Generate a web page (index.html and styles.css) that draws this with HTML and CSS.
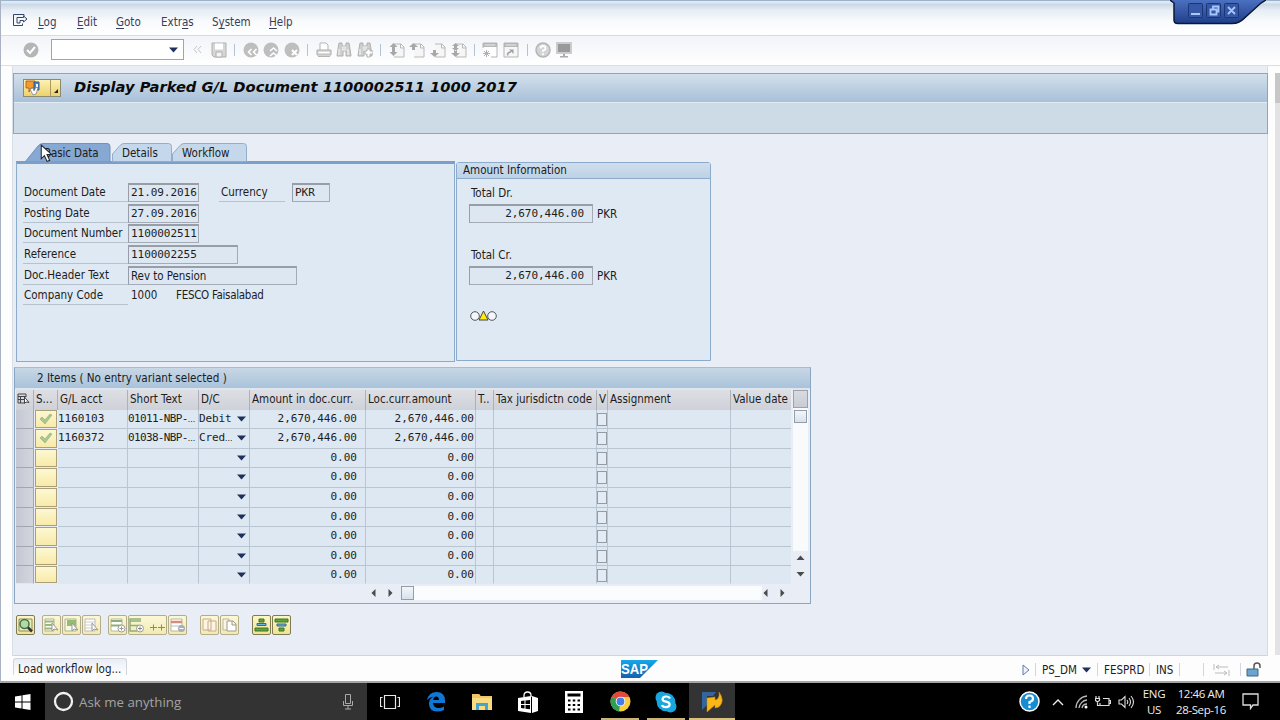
FILE: index.html
```html
<!DOCTYPE html>
<html lang="en">
<head>
  <meta charset="UTF-8" />
  <title>Display Parked G/L Document</title>
  <link rel="stylesheet" href="styles.css">
</head>
<body>
  <!-- Shared icons -->
  <svg class="defs" width="0" height="0">
    <symbol id="down" viewBox="0 0 9 6"><path d="M0 .5h9L4.5 5.5z" fill="#20305c"/></symbol>
    <symbol id="page" viewBox="0 0 16 16"><path d="M5 2h7l3 3v10H5" fill="#f6f6f6" stroke="#b9b9b9"/><path d="M11.500 2v4H15" fill="none" stroke="#b9b9b9"/></symbol>
    <symbol id="tick" viewBox="0 0 14 12"><path d="M1 6l2-2 3 3 5-6 2 1-7 9z" fill="#a9c68c" stroke="#92ad7c" stroke-width=".6"/></symbol>
    <symbol id="cursor" viewBox="0 0 12 18"><path d="M1 1v13l3-3 2.500 5.500 2.500-1L6.500 10H11z" fill="#fff" stroke="#222"/></symbol>
    <symbol id="binoc" viewBox="0 0 16 16"><path d="M3 1h3v3h4V1h3l1 6 1 7h-5V9H7v5H1l1-7z" fill="#cfcfcf" stroke="#b0b0b0"/><path d="M7 4v5M9 4v5M3 7v6M12 7v6" stroke="#f7f7f7"/></symbol>
  </svg>

  <div class="window">
    <div class="menubar">
      <svg class="menu-icon" width="15" height="13" viewBox="0 0 15 13"><path d="M11 2.500v-2H.500v11h9V9.500M4 3.500h6.500V2L14 5l-3.500 3V6.500H7V9H4z" fill="none" stroke="#34446a"/></svg>
      <nav class="menu">
        <a><u>L</u>og</a>
        <a><u>E</u>dit</a>
        <a><u>G</u>oto</a>
        <a>Extr<u>a</u>s</a>
        <a>S<u>y</u>stem</a>
        <a><u>H</u>elp</a>
      </nav>
      <div class="win-controls">
        <svg width="96" height="26" viewBox="0 0 96 26">
          <defs><linearGradient id="wg" x1="0" y1="0" x2="0" y2="1"><stop offset="0" stop-color="#4a70c0"/><stop offset="1" stop-color="#1f3d88"/></linearGradient></defs>
          <path d="M0 0l4 3v17q0 4 4 4h54q7 0 12-5L91 3l5-3z" fill="url(#wg)"/>
          <path d="M0 0l4 3v17q0 3.500 4 3.500h54q7 0 12-5L91 3l5-3" fill="none" stroke="#0b1838" stroke-width="1.500"/>
          <g fill="#3458a6" stroke="#1c3576"><rect x="18.500" y="3.500" width="14" height="14" rx="1"/><rect x="36.500" y="3.500" width="14" height="14" rx="1"/><rect x="54.500" y="3.500" width="14" height="14" rx="1"/></g>
          <path d="M21 14h9M40.500 9.500h6v5h-6zM43 9V6.500h5.500v5H47M58 7l7 7M65 7l-7 7" fill="none" stroke="#a9c6ff" stroke-width="1.800"/>
        </svg>
      </div>
    </div>

    <div class="toolbar">
      <svg class="ok" width="16" height="16"><circle cx="8" cy="8" r="7.500" fill="#b5b5b5"/><path d="M4 8l3 3 5-6" fill="none" stroke="#fff" stroke-width="2"/></svg>
      <div class="command"><svg width="9" height="6"><use href="#down"/></svg></div>
      <svg class="collapse" width="9" height="9"><path d="M4 1L1 4.500 4 8M8 1L5 4.500 8 8" fill="none" stroke="#c6c6c6"/></svg>
      <div class="icons">
        <svg width="16" height="16"><path d="M1 1h14v14H3l-2-2z" fill="#d6d6d6" stroke="#b0b0b0"/><path d="M4 1.500h8v6H4z" fill="#fff"/><path d="M5 10h6v5H5z" fill="#f4f4f4" stroke="#b0b0b0"/></svg>
        <i></i>
        <svg width="16" height="16"><circle cx="8" cy="8" r="7.500" fill="#bebebe"/><path d="M8.500 7l-3 3 3 3M13.500 7l-3 3 3 3" fill="none" stroke="#fff" stroke-width="1.600"/></svg>
        <svg width="16" height="16"><circle cx="8" cy="8" r="7.500" fill="#bebebe"/><path d="M7 9l3.500-3L14 9M7 14l3.500-3 3.500 3" fill="none" stroke="#fff" stroke-width="1.600"/></svg>
        <svg width="16" height="16"><circle cx="8" cy="8" r="7.500" fill="#bebebe"/><path d="M8 8l5 5M13 8l-5 5" stroke="#fff" stroke-width="2"/></svg>
        <i></i>
        <svg width="16" height="16"><path d="M4 8V1h6l2 2v5" fill="#fff" stroke="#b5b5b5"/><path d="M1 8h14v5H1z" fill="#ddd" stroke="#aaa"/><path d="M2 14.500h12" stroke="#b5b5b5"/><path d="M3 10.500h10" stroke="#fff"/></svg>
        <svg width="16" height="16"><use href="#binoc"/></svg>
        <svg width="16" height="16"><use href="#binoc"/><path d="M10 7h3v2h3v3h-3v3h-3v-3H8V9h2z" fill="#fff" stroke="#b5b5b5"/></svg>
        <i></i>
        <svg width="16" height="16"><use href="#page"/><path d="M4.500 1L8.500 5H6v5h2.500L4.500 14l-4-4H3V5H.5z" fill="#a8a8a8"/></svg>
        <svg width="16" height="16"><use href="#page"/><path d="M4.500 1L9 5H6v3H3V5H0z" fill="#a8a8a8"/></svg>
        <svg width="16" height="16"><use href="#page"/><path d="M4.500 15L9 11H6V8H3v3H0z" fill="#a8a8a8"/></svg>
        <svg width="16" height="16"><use href="#page"/><path d="M4.500 1L8 4H6v2h2L4.500 9 1 6h2V4H1zM4.500 15L9 11H6V8H3v3H0z" fill="#a8a8a8"/></svg>
        <i></i>
        <svg width="16" height="16"><path d="M1 6V1h14v14H9" fill="#fff" stroke="#b5b5b5"/><path d="M1 1h14v4H1z" fill="#b5b5b5"/><path d="M2.500 3h11" stroke="#eee"/><path d="M4.500 8v7M1 11.500h7M2 9l5 5M7 9l-5 5" stroke="#b0b0b0"/></svg>
        <svg width="16" height="16"><path d="M1 1h14v14H1z" fill="#f6f6f6" stroke="#b5b5b5"/><path d="M1 1h14v4H1z" fill="#b5b5b5"/><path d="M2.500 3h11" stroke="#eee"/><path d="M4.500 13.500q0-3.500 3.500-3.500" fill="none" stroke="#a0a0a0" stroke-width="1.500"/><path d="M6 7.500h4.500V12z" fill="#a0a0a0"/></svg>
        <i></i>
        <svg width="16" height="16"><circle cx="8" cy="8" r="7" fill="#d4d4d4" stroke="#b5b5b5" stroke-width="1.500"/><path d="M5.500 6.500Q5.500 4 8 4t2.500 2.200Q10.500 8 8 8.500V10M8 11.300v1.700" fill="none" stroke="#fff" stroke-width="1.800"/></svg>
        <svg width="16" height="16"><path d="M1 1h14v10H1z" fill="#999" stroke="#ccc" stroke-width="2"/><path d="M7 12h2v2h3v1.500H4V14h3z" fill="#aaa"/></svg>
      </div>
    </div>

    <div class="body">
      <main class="screen">
        <div class="title-area">
          <header class="title-bar">
            <div class="gos">
              <svg width="38" height="18" viewBox="0 0 38 18"><path d="M3 2h9v7H8l-2 4V9H3z" fill="#f59a2b" stroke="#b8641c"/><path d="M11 3h5v8h-5z" fill="#4f87ba" stroke="#2c5c8c"/><path d="M13 5h2v3h-2z" fill="#fff"/><path d="M7 10l3-1 1 3 2-4 2 1-2 6-3 1z" fill="#fff" stroke="#777" stroke-width=".7"/><path d="M27.500 1v16" stroke="#a89a60"/><path d="M35 10v4h-4z" fill="#222"/></svg>
            </div>
            <h1>Display Parked G/L Document 1100002511 1000 2017</h1>
          </header>
          <div class="app-toolbar"></div>
        </div>

        <div class="header-data">
          <section class="basic">
            <div class="tabs">
              <div class="tab active"><svg width="86" height="19"><path d="M0 19L13 3q2-2.500 5-2.500h64q3 0 3 3V19z" fill="#86a8d3" stroke="#6f93bd"/></svg><span>Basic Data</span></div>
              <div class="tab"><svg width="60" height="19"><path d="M.5 18.500V11L8 2.500q2-2 4-2h44.500q3 0 3 3v15z" fill="#c4d7eb" stroke="#94aeca"/></svg><span>Details</span></div>
              <div class="tab"><svg width="75" height="19"><path d="M.5 18.500V11L8 2.500q2-2 4-2h59.500q3 0 3 3v15z" fill="#c4d7eb" stroke="#94aeca"/></svg><span>Workflow</span></div>
            </div>
            <div class="panel">
              <div class="line"><label>Document Date</label><b class="field w-date">21.09.2016</b><label class="cur">Currency</label><b class="field w-cur">PKR</b></div>
              <div class="line"><label>Posting Date</label><b class="field w-date">27.09.2016</b></div>
              <div class="line"><label>Document Number</label><b class="field w-date">1100002511</b></div>
              <div class="line"><label>Reference</label><b class="field w-ref">1100002255</b></div>
              <div class="line"><label>Doc.Header Text</label><b class="field w-text prop">Rev to Pension</b></div>
              <div class="line"><label>Company Code</label><span class="code">1000</span><span class="company">FESCO Faisalabad</span></div>
            </div>
            <svg class="pointer" width="13" height="19" viewBox="0 0 12 18"><use href="#cursor"/></svg>
          </section>

          <section class="amounts">
            <h2>Amount Information</h2>
            <p>Total Dr.</p>
            <div class="amount"><b class="field">2,670,446.00</b><span>PKR</span></div>
            <p>Total Cr.</p>
            <div class="amount"><b class="field">2,670,446.00</b><span>PKR</span></div>
            <svg class="light" width="28" height="12"><g fill="#f3f6fa" stroke="#555"><circle cx="5" cy="6" r="4.300"/><circle cx="22" cy="6" r="4.300"/></g><path d="M13.500 1L18 10H9z" fill="#ffee10" stroke="#444"/></svg>
          </section>
        </div>

        <section class="items">
          <h2>2 Items ( No entry variant selected )</h2>
          <div class="grid">
            <div class="row head">
              <span class="cfg"><svg width="13" height="12"><path d="M9 4V1H1v9h6M1 3.500h8M1 6.500h6M3.500 3.500V10" fill="none" stroke="#444"/><path d="M7.500 4v6.500l1.500-1.500 3 .5z" fill="#fff" stroke="#444"/></svg></span><span>S...</span><span>G/L acct</span><span>Short Text</span><span>D/C</span><span>Amount in doc.curr.</span><span>Loc.curr.amount</span><span>T..</span><span>Tax jurisdictn code</span><span>V</span><span>Assignment</span><span>Value date</span>
            </div>
            <div class="row"><span class="sel"></span><span class="st"><svg width="14" height="12"><use href="#tick"/></svg></span><span>1160103</span><span class="short">01011-NBP-<em>...</em></span><span class="dc">Debit<svg width="9" height="6"><use href="#down"/></svg></span><span class="num">2,670,446.00</span><span class="num">2,670,446.00</span><span></span><span></span><span class="chk"><i></i></span><span></span><span></span></div>
            <div class="row"><span class="sel"></span><span class="st"><svg width="14" height="12"><use href="#tick"/></svg></span><span>1160372</span><span class="short">01038-NBP-<em>...</em></span><span class="dc">Cred<em>...</em><svg width="9" height="6"><use href="#down"/></svg></span><span class="num">2,670,446.00</span><span class="num">2,670,446.00</span><span></span><span></span><span class="chk"><i></i></span><span></span><span></span></div>
            <div class="row"><span class="sel"></span><span class="st"></span><span></span><span></span><span class="dc"><svg width="9" height="6"><use href="#down"/></svg></span><span class="num">0.00</span><span class="num">0.00</span><span></span><span></span><span class="chk"><i></i></span><span></span><span></span></div>
            <div class="row"><span class="sel"></span><span class="st"></span><span></span><span></span><span class="dc"><svg width="9" height="6"><use href="#down"/></svg></span><span class="num">0.00</span><span class="num">0.00</span><span></span><span></span><span class="chk"><i></i></span><span></span><span></span></div>
            <div class="row"><span class="sel"></span><span class="st"></span><span></span><span></span><span class="dc"><svg width="9" height="6"><use href="#down"/></svg></span><span class="num">0.00</span><span class="num">0.00</span><span></span><span></span><span class="chk"><i></i></span><span></span><span></span></div>
            <div class="row"><span class="sel"></span><span class="st"></span><span></span><span></span><span class="dc"><svg width="9" height="6"><use href="#down"/></svg></span><span class="num">0.00</span><span class="num">0.00</span><span></span><span></span><span class="chk"><i></i></span><span></span><span></span></div>
            <div class="row"><span class="sel"></span><span class="st"></span><span></span><span></span><span class="dc"><svg width="9" height="6"><use href="#down"/></svg></span><span class="num">0.00</span><span class="num">0.00</span><span></span><span></span><span class="chk"><i></i></span><span></span><span></span></div>
            <div class="row"><span class="sel"></span><span class="st"></span><span></span><span></span><span class="dc"><svg width="9" height="6"><use href="#down"/></svg></span><span class="num">0.00</span><span class="num">0.00</span><span></span><span></span><span class="chk"><i></i></span><span></span><span></span></div>
            <div class="row last"><span class="sel"></span><span class="st"></span><span></span><span></span><span class="dc"><svg width="9" height="6"><use href="#down"/></svg></span><span class="num">0.00</span><span class="num">0.00</span><span></span><span></span><span class="chk"><i></i></span><span></span><span></span></div>
          </div>
          <div class="vscroll">
            <div class="corner"></div>
            <div class="vtrack"><div class="thumb"></div></div>
            <svg width="15" height="30"><path d="M3.500 9h8L7.500 4.500zM3.500 21h8L7.500 25.500z" fill="#4a4a4a"/></svg>
          </div>
          <div class="hscroll">
            <svg width="28" height="12"><path d="M5.500 2v8L1.500 6zM18.500 2v8l4-4z" fill="#4a4a4a"/></svg>
            <div class="thumb"></div>
            <div class="htrack"></div>
            <svg width="28" height="12"><path d="M5.500 2v8L1.500 6zM18.500 2v8l4-4z" fill="#4a4a4a"/></svg>
          </div>
        </section>

        <div class="actions">
          <button><svg width="17" height="17"><path d="M2 2h13v12H2z" fill="#e8edc0" stroke="#8a8a66"/><circle cx="7.500" cy="7" r="4.500" fill="#b5d6ae" stroke="#3e7a3a" stroke-width="1.500"/><path d="M11 10.500l4 4" stroke="#333" stroke-width="2.500"/></svg></button>
          <button class="off g6"><svg width="17" height="17"><path d="M2 2h9v12H2z" fill="#fff" stroke="#aab292"/><path d="M2 4.500h9M2 8h9M2 11.500h9" stroke="#99b878" stroke-width="2"/><path d="M9 6v8l2-2 4 1z" fill="#fff" stroke="#999"/></svg></button>
          <button class="off"><svg width="17" height="17"><path d="M2 2h11v12H2z" fill="#f7f7e4" stroke="#aab292"/><path d="M4 3h9v6H4z" fill="#96bb72"/><path d="M9 6v8l2-2 4 1z" fill="#fff" stroke="#999"/></svg></button>
          <button class="off"><svg width="17" height="17"><path d="M2 2h10v12H2z" fill="#fff" stroke="#bbb"/><path d="M2 5h10M2 8h8M2 11h8" stroke="#ccc"/><path d="M9 6v8l2-2 4 1z" fill="#fff" stroke="#999"/></svg></button>
          <button class="off g6"><svg width="17" height="17"><path d="M2 2h11v12H2z" fill="#fff" stroke="#b5b8a0"/><path d="M2 4h11M2 8.500h11" stroke="#8db077" stroke-width="2"/><circle cx="12.500" cy="11.500" r="3.500" fill="#fff" stroke="#999"/><path d="M10.500 11.500h4M12.500 9.500v4" stroke="#999"/></svg></button>
          <button class="off wide"><svg width="36" height="17"><path d="M12 2H1v12h7M1 4h11M1 8.500h9" fill="none" stroke="#8db077" stroke-width="1.500"/><circle cx="11" cy="11.500" r="3.500" fill="#fff" stroke="#999"/><path d="M9 11.500h4M11 9.500v4M21 10.500h7M24.500 7.500v6M29 10.500h7M32.500 7.500v6" stroke="#888"/></svg></button>
          <button class="off"><svg width="17" height="17"><path d="M2 2h11v12H2z" fill="#fff" stroke="#b5b8a0"/><path d="M2 5h11" stroke="#d98a7c" stroke-width="2.500"/><path d="M2 9h11" stroke="#bbb"/><circle cx="12.500" cy="11.500" r="3.500" fill="#a9aebb"/><path d="M10.500 11.500h4" stroke="#fff"/></svg></button>
          <button class="off g12"><svg width="17" height="17"><path d="M2 2h8v11H2zM7 4h8v10H7z" fill="#fbf6e2" stroke="#c8a98c"/></svg></button>
          <button class="off"><svg width="17" height="17"><path d="M2 2h6v11H2z" fill="#fbf6e2" stroke="#bbb69a"/><path d="M6 4h6l3 3v7H6zM11 4v4h4" fill="#fff" stroke="#9a9a94"/></svg></button>
          <button class="g12"><svg width="17" height="17"><path d="M6 2h5v3H6zM2 11h13v3H2z" fill="#5ca63a" stroke="#3c7428"/><path d="M4 6.500h9v2H4z" fill="#6bb6dc" stroke="#32698c"/></svg></button>
          <button><svg width="17" height="17"><path d="M2 2h13v3H2zM6 11h5v3H6z" fill="#5ca63a" stroke="#3c7428"/><path d="M4 7h9v2H4z" fill="#6bb6dc" stroke="#32698c"/></svg></button>
        </div>
      </main>
      <div class="page-scroll"></div>
    </div>

    <footer class="status">
      <div class="message">Load workflow log...</div>
      <svg class="sap" width="37" height="18" viewBox="0 0 37 18">
        <defs><linearGradient id="sg" x1="0" y1="0" x2="0" y2="1"><stop offset="0" stop-color="#16a7e8"/><stop offset="1" stop-color="#1560ae"/></linearGradient></defs>
        <path d="M0 0h37L19 18H0z" fill="url(#sg)"/>
        <text x="0" y="14" textLength="27" lengthAdjust="spacingAndGlyphs">SAP</text>
      </svg>
      <div class="info">
        <svg class="play" width="8" height="12"><path d="M1 1v10l6-5z" fill="#eef3fb" stroke="#6079ad"/></svg>
        <span class="c1">PS_DM <svg width="9" height="6"><use href="#down"/></svg></span>
        <span class="c2">FESPRD</span>
        <span class="c3">INS</span>
        <span class="c4"></span>
        <span class="c5"><svg width="17" height="12"><path d="M1 0v6M3 3h12M6 1L3 3l3 2M16 6v6M2 9h12M11 7l3 2-3 2" fill="none" stroke="#bbb"/></svg></span>
        <span class="c6"><svg width="16" height="15"><path d="M8 7V4q0-3 3-3t3 3v2" fill="none" stroke="#555" stroke-width="1.500"/><path d="M1 7h11v7H1z" fill="#6ba4cc" stroke="#3c6684"/></svg></span>
      </div>
    </footer>
  </div>

  <div class="taskbar">
    <div class="start"><svg width="16" height="16"><path d="M0 2.500L6.500 1.500V7.500H0zM7.500 1.300L15.500 0v7.500h-8zM0 8.500h6.500v6L0 13.500zM7.500 8.500h8V16l-8-1.300z" fill="#fff"/></svg></div>
    <div class="search">
      <svg width="21" height="21"><circle cx="10.500" cy="10.500" r="8.500" fill="none" stroke="#f2f2f2" stroke-width="2.300"/></svg>
      <span>Ask me anything</span>
      <svg class="mic" width="12" height="17"><path d="M3.500 1.500h5v9h-5zM1.500 8v4.500h9V8M6 12.500V16M3 16h6" fill="none" stroke="#aaa"/></svg>
    </div>
    <div class="app first"><svg width="20" height="14"><path d="M4.500.5h11v13h-11zM2.500 2.500h-2v9h2M17.500 2.500h2v9h-2" fill="none" stroke="#e8e8e8" stroke-width="1.200"/></svg></div>
    <div class="app"><svg width="20" height="21"><path d="M1 9Q3 1 10.500 1 19 1 19 9.500V12H7q.5 5 5.500 5 3 0 5.500-1.500V19q-3 1.500-6.500 1.500Q3 20.500 3 12.500 3 8 7.500 5.500 3.500 6 1 9zM7.200 9H13q0-3.500-2.800-3.500T7.200 9z" fill="#0f78d4"/></svg></div>
    <div class="app"><svg width="20" height="17"><path d="M0 1h7l1.500 2H20v14H0z" fill="#f8dc84"/><path d="M0 1h7l1.500 2H20v2H0z" fill="#efc768"/><path d="M4 17v-7h12v7h-3v-4H7v4z" fill="#44a5cc"/></svg></div>
    <div class="app"><svg width="20" height="22"><path d="M6 6V4.500Q6 1 9.500 1T13 4.500V6" fill="none" stroke="#fff" stroke-width="1.300"/><path d="M0 7l13-2v17L0 20zM14 5l6 2v13l-6 2z" fill="#fff"/><path d="M3 10l3.500-.5V13H3zM7.500 9.500L12 9v4H7.500zM3 14h3.500v3.500L3 17zM7.500 14H12v4.300l-4.500-.6z" fill="#000"/></svg></div>
    <div class="app"><svg width="18" height="22"><path d="M0 0h18v22H0z" fill="#fff"/><path d="M2.500 2.500h13v3h-13z" fill="#000"/><path d="M3 9.500h12M3 14h12M3 18.500h12" stroke="#000" stroke-width="2" stroke-dasharray="2.500 2.250"/></svg></div>
    <div class="app open"><svg width="21" height="21"><circle cx="10.500" cy="10.500" r="10" fill="#f9cd3c"/><path d="M10.500 10.500L1.800 5.500A10 10 0 0 0 9 20.400z" fill="#2f9e52"/><path d="M10.500 10.500L1.800 5.500A10 10 0 0 1 19.400 6H10.500z" fill="#dd4b3c"/><circle cx="10.500" cy="10.500" r="4.800" fill="#fff"/><circle cx="10.500" cy="10.500" r="3.900" fill="#447ce8"/></svg></div>
    <div class="app open"><svg width="22" height="22"><circle cx="6.500" cy="6.500" r="6" fill="#19a6e0"/><circle cx="15.500" cy="15.500" r="6" fill="#19a6e0"/><circle cx="11" cy="11" r="9.300" fill="#19a6e0"/><path d="M15 7.500q-1-2-4-2t-3.500 2.500q0 2 3.500 2.700t3.700 2.700q-.2 2.800-3.700 2.800T7 14" fill="none" stroke="#fff" stroke-width="2.200"/></svg></div>
    <div class="app open current"><svg width="22" height="22"><path d="M1 1h14l-3 4H6v9l-5 5z" fill="#33659f"/><path d="M6 7l8-1v3q5-1 4-8 6 8 1 14-2 2-5 2v-3L6 21z" fill="#f8b617" stroke="#c8850e" stroke-width=".5"/></svg></div>
    <div class="tray">
      <svg class="help" width="21" height="21"><circle cx="10.500" cy="10.500" r="9.500" fill="#168cd2" stroke="#fff" stroke-width="1.500"/><path d="M7 8q0-3.500 3.500-3.500T14 7.700Q14 10 10.500 11v2M10.500 14.500V17" fill="none" stroke="#fff" stroke-width="2.200"/></svg>
      <svg class="up" width="12" height="8"><path d="M1 7l5-5 5 5" fill="none" stroke="#eee" stroke-width="1.400"/></svg>
      <svg class="wifi" width="13" height="14"><path d="M1 13A12 12 0 0 1 12 1M4 13a9 9 0 0 1 8-8M7 13a5 5 0 0 1 5-4" fill="none" stroke="#bbb" stroke-width="1.300"/><circle cx="11" cy="12" r="1.500" fill="#fff"/></svg>
      <svg class="bat" width="16" height="13"><path d="M8 3.500h6v7H5V8M14 5.500h1.500v3H14M1 1v2M4 1v2M.5 3.500h4v2l-2 1.500-2-1.500zM2.500 7v3.500H5" fill="none" stroke="#ddd" stroke-width="1.200"/></svg>
      <svg class="vol" width="17" height="14"><path d="M1 5h2.500L7 1.500v11L3.500 9H1zM9 5q1.500 2 0 4M11 3q3 4 0 8M13 1q5 6 0 12" fill="none" stroke="#ddd" stroke-width="1.100"/></svg>
      <div class="lang">ENG<br>US</div>
      <div class="clock">12:46 AM<br>28-Sep-16</div>
      <svg class="note" width="17" height="17"><path d="M1 1h15v11h-5l-2.500 3.500V12H1z" fill="none" stroke="#ddd" stroke-width="1.300"/></svg>
    </div>
  </div>
</body>
</html>
```
FILE: styles.css
```css
* {
  box-sizing: border-box;
}

body {
  margin: 0;
  width: 1280px;
  height: 720px;
  overflow: hidden;
  display: flex;
  flex-direction: column;
  background: #000;
  font: 11.500px "DejaVu Sans Condensed", "DejaVu Sans", sans-serif;
  font-stretch: condensed;
  color: #1c1c1c;
}

svg {
  display: block;
  flex: none;
}

h1, h2, p {
  margin: 0;
}

.defs {
  position: absolute;
}

.window {
  height: 683px;
  flex: none;
  display: flex;
  flex-direction: column;
  background: #fdfdfe;
  border-left: 1px solid #a9b2c2;
  border-bottom: 2px solid #a5a5a5;
}

/* Menu */
.menubar {
  height: 36px;
  flex: none;
  display: flex;
  align-items: flex-start;
  position: relative;
  border-top: 1px solid #9fb4ca;
  border-bottom: 1px solid #d9dbe0;
  background: linear-gradient(#dce9f6 0, #dce9f6 2px, #c9d8e6 3px, #e6edf4 9px, #f8fafc 20px, #fff);
}
.menu-icon {
  margin: 13px 0 0 12px;
}
.menu {
  display: grid;
  grid-template-columns: 39px 39px 45px 51px 57px 40px;
  margin: 14px 0 0 10px;
  line-height: 15px;
  color: #34405c;
}
.menu u {
  text-underline-offset: 2px;
}
.win-controls {
  position: absolute;
  right: 14px;
  top: -1px;
}
.win-controls svg {
  width: 96px;
}

.toolbar {
  height: 30px;
  flex: none;
  display: flex;
  align-items: center;
  padding-bottom: 2px;
  border-bottom: 1px solid #dcdee4;
  background: linear-gradient(#f2f4f9, #fff);
}
.ok {
  margin-left: 22px;
}
.command {
  width: 133px;
  height: 21px;
  margin-left: 12px;
  border: 1px solid #a2a4aa;
  background: #fff;
  display: flex;
  align-items: center;
  justify-content: flex-end;
  padding-right: 5px;
}
.collapse {
  margin: 0 9px 0 9px;
}
.icons {
  display: flex;
  align-items: center;
  gap: 4.780px;
}
.icons i {
  width: 6px;
  height: 12px;
  background: linear-gradient(#b3c3d3, #b3c3d3) center / 1px 100% no-repeat;
}

.body {
  height: 590px;
  flex: none;
  display: flex;
}
.screen {
  width: 1256px;
  margin-left: 11px;
  padding-top: 7px;
  background: #e9eef6;
  border-left: 1px solid #d8dfe9;
  border-bottom: 1px solid #cdd5e2;
  border-right: 1px solid #d4dbe6;
}
.page-scroll {
  width: 5px;
  margin: 7px 0 1px auto;
  background: linear-gradient(#c9c6c8 30px, #e3e3e5 30px);
}

.title-area {
  width: 1255px;
  height: 61px;
  border: 1px solid #8da5c0;
}
.title-bar {
  height: 29px;
  display: flex;
  align-items: center;
  padding-bottom: 1px;
  border-bottom: 1px solid #e1ebf3;
  background: linear-gradient(#d3e0eb, #bdd0e1 50%, #a8c0d9);
}
.gos {
  margin-left: 9px;
  height: 18px;
  width: 38px;
  background: linear-gradient(#fdf3b9, #edcf68);
  outline: 1px solid #8d8a72;
  outline-offset: -1px;
}
h1 {
  margin: 0 0 2px 13px;
  font: italic bold 14.700px "DejaVu Sans", sans-serif;
  font-stretch: normal;
  color: #0a0a0a;
  white-space: nowrap;
}
.app-toolbar {
  height: 30px;
  background: #cddbe6;
}

.header-data {
  display: flex;
  padding: 9px 0 0 3px;
  height: 227px;
}
.basic {
  width: 439px;
  position: relative;
}
.tabs {
  display: flex;
  height: 18px;
  padding-left: 10px;
}
.tab {
  position: relative;
}
.tab.active {
  margin-left: -1px;
  margin-right: 1px;
}
.tab span {
  position: absolute;
  left: 10px;
  top: 3px;
  white-space: nowrap;
}
.tab.active span {
  left: 19px;
  letter-spacing: -.1px;
}
.panel {
  height: 201px;
  padding: 19px 7px 0 6px;
  border: 1px solid #8cabcb;
  border-top: 3px solid #7c9fca;
  background: #dfe9f3;
}
.line {
  display: flex;
  height: 20.700px;
  line-height: 19px;
}
.line label {
  width: 105px;
  height: 19px;
  padding-left: 1px;
  border-bottom: 1px solid #b7c2ce;
  white-space: nowrap;
}
.line .cur {
  width: 66px;
  margin: 0 7px 0 20px;
  padding-left: 2px;
}
.code {
  width: 48px;
  padding-left: 3px;
}
.company {
  letter-spacing: -.3px;
}
.field {
  display: block;
  height: 19px;
  font: 11px/16px "DejaVu Sans Mono", monospace;
  letter-spacing: -.05px;
  border: 1px solid #a5abb4;
  border-top: 2px solid #989ea8;
  border-left-color: #989ea8;
  padding-left: 2px;
  background: #dde7f1;
  white-space: nowrap;
}
.field.prop {
  font-family: "DejaVu Sans Condensed", "DejaVu Sans", sans-serif;
  font-stretch: condensed;
  font-size: 11.500px;
}
.w-date { width: 71px; }
.w-cur { width: 38px; }
.w-ref { width: 110px; }
.w-text { width: 169px; }
.pointer {
  position: absolute;
  left: 24px;
  top: 1px;
}

.amounts {
  width: 255px;
  height: 199px;
  margin: 19px 0 0 1px;
  border: 1px solid #8cabcb;
  border-radius: 3px 3px 0 0;
  background: #dfe9f3;
  line-height: 14px;
}
.amounts h2 {
  height: 16px;
  padding-left: 6px;
  font-weight: normal;
  font-size: 11.500px;
  line-height: 15px;
  border-bottom: 1px solid #8cabcb;
  background: linear-gradient(#cfdeed, #bdd2e6);
}
.amounts p {
  padding: 7px 0 0 14px;
  height: 25px;
}
.amount {
  display: flex;
  align-items: center;
  gap: 4px;
  height: 19px;
  margin: 0 0 18px 12px;
}
.amount .field {
  width: 124px;
  text-align: right;
  padding-right: 8px;
}
.amount + .light {
  margin: 25px 0 0 13px;
}

/* Line items */
.items {
  width: 797px;
  height: 237px;
  margin: 6px 0 0 1px;
  display: grid;
  grid-template-columns: 776px 1fr;
  grid-template-rows: 22px 194px 1fr;
  border: 1px solid #8ba6c0;
  border-top-color: #a9bccf;
}
.items h2 {
  grid-column: 1 / -1;
  font-size: 11.600px;
  font-weight: normal;
  line-height: 20px;
  padding-left: 22px;
  border-bottom: 2px solid #dde5ee;
  background: linear-gradient(#c8d7e5, #a9c3da);
}
.grid {
  padding-left: 1px;
}
.row {
  display: grid;
  grid-template-columns: 18px 24px 70px 71px 51px 116px 110px 18px 103px 11px 123px 60px;
  height: 19.600px;
  font: 11px/18px "DejaVu Sans Mono", monospace;
}
.row.last {
  height: 18px;
}
.row span {
  border-right: 1px solid #b9c5d1;
  border-bottom: 1px solid #b9c5d1;
  background: #dde8f2;
  white-space: nowrap;
  overflow: hidden;
}
.row.last span {
  border-bottom-color: #dde8f2;
}
.row span:last-child {
  border-right: 0;
}
.row em {
  font: 9px/18px "Liberation Sans", sans-serif;
  letter-spacing: 0;
}
.row .short {
  letter-spacing: -.650px;
}
.row.head {
  font: 11.500px/19px "DejaVu Sans Condensed", "DejaVu Sans", sans-serif;
  font-stretch: condensed;
}
.row.head span {
  padding-left: 2px;
  background: linear-gradient(#dddfe5, #cfd1d8);
  border-bottom: 0;
  border-right-color: #aeb0b8;
}
.row.head .cfg {
  padding: 3px 0 0 1px;
}
.row .sel {
  background: linear-gradient(90deg, #c5c8d3, #d3d5de);
  border-color: #a3a6b0;
}
.row .st {
  background: linear-gradient(#fdf8d2, #f8eaa8);
  border: 1px solid #ab9f7b;
  margin: 0 1px 1px 1px;
  padding: 2px 0 0 3px;
}
.row.last .st {
  border-bottom-color: #ab9f7b;
}
.row .dc {
  display: flex;
  justify-content: space-between;
  padding-right: 3px;
  letter-spacing: -.1px;
}
.dc svg {
  margin: 6px 0 0 auto;
}
.row .num {
  text-align: right;
  padding-right: 8px;
}
.row .num + .num {
  padding-right: 1px;
}
.row .chk {
  padding-top: 3px;
}
.chk i {
  display: block;
  height: 13px;
  border: 1px solid #959ba5;
  background: #e3ebf4;
}

.vscroll {
  display: flex;
  flex-direction: column;
  padding-left: 2px;
}
.corner {
  width: 15px;
  height: 18px;
  border: 1px solid #9da1ab;
  background: linear-gradient(#d9dbe1, #c9ccd4);
}
.vtrack {
  width: 15px;
  height: 143px;
  padding: 2px 1px 0;
  background: #f9fafc;
}
.thumb {
  width: 13px;
  height: 13px;
  border: 1px solid #959dab;
  background: linear-gradient(#f2f6fa, #d8e1eb);
}
.hscroll {
  grid-column: 1 / -1;
  display: flex;
  align-items: center;
  height: 17px;
  padding-left: 355px;
}
.hscroll .thumb {
  margin-left: 3px;
  height: 14px;
}
.htrack {
  width: 348px;
  height: 14px;
  background: #fbfcfd;
}

.actions {
  display: flex;
  gap: 1px;
  padding: 11px 0 0 3px;
}
.actions button {
  width: 19px;
  height: 20px;
  padding: 1px 0 0;
  border: 1px solid #7f7b53;
  border-radius: 2px;
  background: linear-gradient(#fdf6c6, #f1e294);
}
.actions .off {
  border-color: #b3ad8c;
  background: linear-gradient(#fcf8d6, #f3eab2);
}
.actions .wide {
  width: 39px;
}
.actions .g6 { margin-left: 6px; }
.actions .g12 { margin-left: 12px; }

.status {
  flex: 1;
  display: flex;
}
.message {
  width: 114px;
  height: 17px;
  margin: 2px 0 0 12px;
  padding-left: 4px;
  line-height: 20px;
  border: 1px solid #cfd4dd;
  border-bottom: 0;
  border-radius: 3px 3px 0 0;
  background: linear-gradient(#e9edf5, #fff);
  white-space: nowrap;
}
.sap {
  margin: 4px 0 0 494px;
}
.sap text {
  font: bold 15px "Liberation Sans", sans-serif;
  fill: #fff;
}
.info {
  display: flex;
  align-items: center;
  height: 13px;
  margin: 7px 0 0 auto;
  white-space: nowrap;
}
.info span {
  display: flex;
  align-items: center;
  height: 13px;
  padding-left: 6px;
  border-left: 1px solid #d4d6dc;
}
.info .play { margin-right: 5px; }
.info .c1 { width: 62px; gap: 5px; }
.info .c2 { width: 52px; }
.info .c3 { width: 30px; }
.info .c4 { width: 24px; }
.info .c5 { width: 37px; padding-left: 9px; }
.info .c6 { width: 40px; padding-left: 5px; }

/* Taskbar */
.taskbar {
  flex: 1;
  display: flex;
  background: #000;
  color: #eee;
  font: 12px/16px "Open Sans", "Noto Sans", sans-serif;
}
.start {
  width: 45px;
  padding: 11px 0 0 15px;
}
.search {
  width: 322px;
  display: flex;
  align-items: center;
  background: #333;
  color: #a3a3a3;
  font-size: 13.300px;
  padding-left: 8px;
}
.search span {
  margin-left: 5px;
}
.mic {
  margin: 0 13px 0 auto;
}
.app {
  width: 46px;
  display: flex;
  align-items: center;
  justify-content: center;
}
.app.open {
  box-shadow: inset 4px 0 #000, inset -4px 0 #000, inset 0 -2px #c9b576;
}
.app.open.current {
  background: #333;
  box-shadow: inset 0 -2px #d8c27c;
}
.tray {
  display: flex;
  align-items: center;
  margin-left: auto;
}
.up { margin-left: 12px; }
.wifi { margin-left: 11px; }
.bat { margin-left: 7px; }
.vol { margin-left: 7px; }
.lang {
  width: 34px;
  margin-left: 2px;
  text-align: center;
  font-size: 11.500px;
  letter-spacing: -.3px;
}
.clock {
  width: 60px;
  text-align: center;
  white-space: nowrap;
  font-size: 11.500px;
  letter-spacing: -.4px;
}
.note { margin: 0 21px 0 11px; }
```
